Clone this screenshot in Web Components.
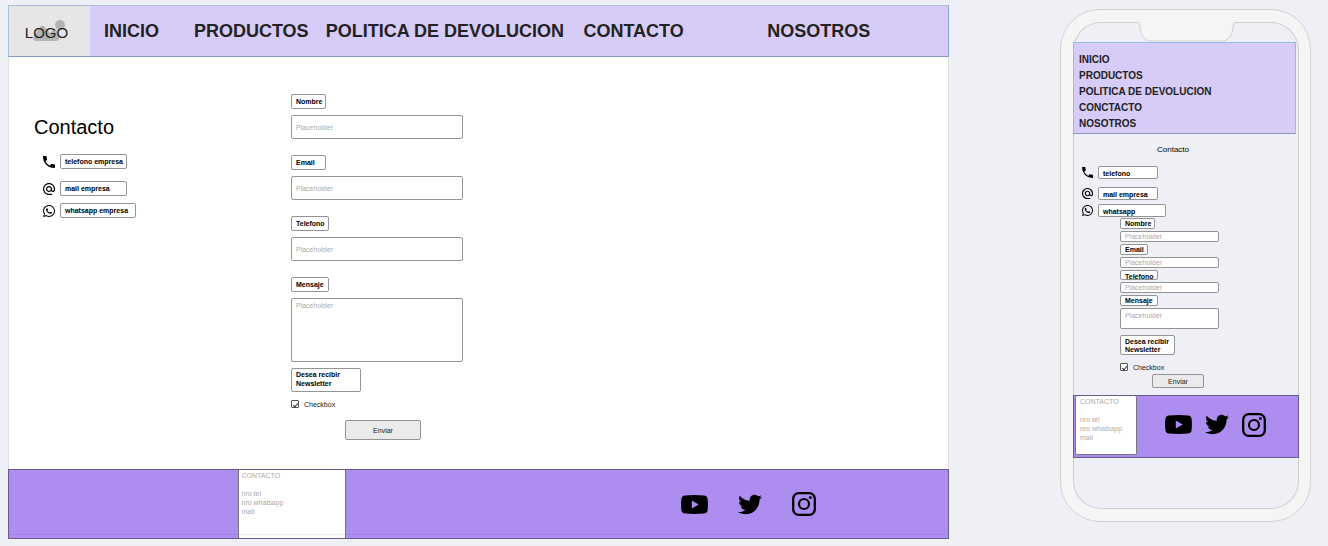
<!DOCTYPE html>
<html lang="es">
<head>
<meta charset="utf-8">
<title>Contacto</title>
<style>
  html { background: #eff0f5; }
  body {
    margin: 0;
    padding: 5px 17px 7px 8px;
    display: flex;
    align-items: flex-start;
    gap: 111px;
    font-family: "Liberation Sans", Arial, sans-serif;
    font-size: 7px;
    line-height: 9px;
    color: #000;
  }
  desktop-page { flex: 1; min-width: 0; }
  phone-frame { flex: none; margin-top: 4px; }
</style>
</head>
<body>
<desktop-page></desktop-page>
<phone-frame><mobile-page></mobile-page></phone-frame>

<script>
const define = (name, markup, setup) => {
  const template = document.createElement('template');
  template.innerHTML = markup;
  customElements.define(name, class extends HTMLElement {
    constructor() {
      super();
      this.attachShadow({ mode: 'open' }).append(template.content.cloneNode(true));
    }
    connectedCallback() {
      if (setup) setup(this, this.shadowRoot);
    }
  });
};

const ICONS = {
  phone: ['3 3 18 18', '<path d="M6.62,10.79C8.06,13.62 10.38,15.94 13.21,17.38L15.41,15.18C15.69,14.9 16.08,14.82 16.43,14.93C17.55,15.3 18.75,15.5 20,15.5A1,1 0 0,1 21,16.5V20A1,1 0 0,1 20,21A17,17 0 0,1 3,4A1,1 0 0,1 4,3H7.5A1,1 0 0,1 8.5,4C8.5,5.25 8.7,6.45 9.07,7.57C9.18,7.92 9.1,8.31 8.82,8.59L6.62,10.79Z"/>'],
  at: ['2 2 20 20', '<path d="M12,15C12.81,15 13.5,14.7 14.11,14.11C14.7,13.5 15,12.81 15,12C15,11.19 14.7,10.5 14.11,9.89C13.5,9.3 12.81,9 12,9C11.19,9 10.5,9.3 9.89,9.89C9.3,10.5 9,11.19 9,12C9,12.81 9.3,13.5 9.89,14.11C10.5,14.7 11.19,15 12,15M12,2C14.75,2 17.1,3 19.05,4.95C21,6.9 22,9.25 22,12V13.45C22,14.45 21.65,15.3 21,16C20.3,16.67 19.5,17 18.5,17C17.3,17 16.31,16.5 15.56,15.5C14.56,16.5 13.38,17 12,17C10.63,17 9.45,16.5 8.46,15.54C7.5,14.55 7,13.38 7,12C7,10.63 7.5,9.45 8.46,8.46C9.45,7.5 10.63,7 12,7C13.38,7 14.55,7.5 15.54,8.46C16.5,9.45 17,10.63 17,12V13.45C17,13.86 17.16,14.22 17.46,14.53C17.76,14.84 18.11,15 18.5,15C18.92,15 19.27,14.84 19.57,14.53C19.87,14.22 20,13.86 20,13.45V12C20,9.81 19.23,7.93 17.65,6.35C16.07,4.77 14.19,4 12,4C9.81,4 7.93,4.77 6.35,6.35C4.77,7.93 4,9.81 4,12C4,14.19 4.77,16.07 6.35,17.65C7.93,19.23 9.81,20 12,20H17V22H12C9.25,22 6.9,21 4.95,19.05C3,17.1 2,14.75 2,12C2,9.25 3,6.9 4.95,4.95C6.9,3 9.25,2 12,2Z"/>'],
  whatsapp: ['2 2 20 20', '<path d="M12.04 2C6.58 2 2.13 6.45 2.13 11.91C2.13 13.66 2.59 15.36 3.45 16.86L2.05 22L7.3 20.62C8.75 21.41 10.38 21.83 12.04 21.83C17.5 21.83 21.95 17.38 21.95 11.92C21.95 9.27 20.92 6.78 19.05 4.91C17.18 3.03 14.69 2 12.04 2M12.05 3.67C14.25 3.67 16.31 4.53 17.87 6.09C19.42 7.65 20.28 9.72 20.28 11.92C20.28 16.46 16.58 20.15 12.04 20.15C10.56 20.15 9.11 19.76 7.85 19L7.55 18.83L4.43 19.65L5.26 16.61L5.06 16.29C4.24 15 3.8 13.47 3.8 11.91C3.81 7.37 7.5 3.67 12.05 3.67M8.53 7.33C8.37 7.33 8.1 7.39 7.87 7.64C7.65 7.89 7 8.5 7 9.71C7 10.93 7.89 12.1 8 12.27C8.14 12.44 9.76 14.94 12.25 16C12.84 16.27 13.3 16.42 13.66 16.53C14.25 16.72 14.79 16.69 15.22 16.63C15.7 16.56 16.68 16.03 16.89 15.45C17.1 14.87 17.1 14.38 17.04 14.27C16.97 14.17 16.81 14.11 16.56 14C16.31 13.86 15.09 13.26 14.87 13.18C14.64 13.1 14.5 13.06 14.31 13.3C14.15 13.55 13.67 14.11 13.53 14.27C13.38 14.44 13.24 14.46 13 14.34C12.74 14.21 11.94 13.95 11 13.11C10.26 12.45 9.77 11.64 9.62 11.39C9.5 11.15 9.61 11 9.73 10.89C9.84 10.78 10 10.6 10.1 10.45C10.23 10.31 10.27 10.2 10.35 10.04C10.43 9.87 10.39 9.73 10.33 9.61C10.27 9.5 9.77 8.26 9.56 7.77C9.36 7.29 9.16 7.35 9 7.34C8.86 7.34 8.7 7.33 8.53 7.33Z"/>'],
  youtube: ['0 0 27 19', '<path fill-rule="evenodd" d="M4 .4Q13.500-.4 23 .4Q26.300.7 26.600 4Q27.300 9.500 26.600 15Q26.300 18.300 23 18.600Q13.500 19.400 4 18.600Q.7 18.300.4 15Q-.3 9.500.4 4Q.7.7 4 .4ZM10.800 5.500V13.500L17.600 9.500Z"/>'],
  twitter: ['1.500 4 21 17', '<path d="M22.46,6C21.69,6.35 20.86,6.58 20,6.69C20.88,6.16 21.56,5.32 21.88,4.31C21.05,4.81 20.13,5.16 19.16,5.36C18.37,4.5 17.26,4 16,4C13.65,4 11.73,5.92 11.73,8.29C11.73,8.63 11.77,8.96 11.84,9.27C8.28,9.09 5.11,7.38 3,4.79C2.63,5.42 2.42,6.16 2.42,6.94C2.42,8.43 3.17,9.75 4.33,10.5C3.62,10.5 2.96,10.3 2.38,10C2.38,10 2.38,10 2.38,10.03C2.38,12.11 3.86,13.85 5.82,14.24C5.46,14.34 5.08,14.39 4.69,14.39C4.42,14.39 4.15,14.36 3.89,14.31C4.43,16 6,17.26 7.89,17.29C6.43,18.45 4.58,19.13 2.56,19.13C2.22,19.13 1.88,19.11 1.54,19.07C3.44,20.29 5.7,21 8.12,21C16,21 20.33,14.46 20.33,8.79C20.33,8.6 20.33,8.42 20.32,8.23C21.16,7.63 21.88,6.87 22.46,6Z"/>'],
  instagram: ['0 0 24 24', '<rect x="1.200" y="1.200" width="21.600" height="21.600" rx="5.500" fill="none" stroke="#000" stroke-width="2.300"/><circle cx="12" cy="12" r="5" fill="none" stroke="#000" stroke-width="2.200"/><circle cx="18.400" cy="5.600" r="1.500"/>']
};

define('ui-icon', `
  <style>
    :host { display: block; width: var(--icon-size, 12px); height: var(--icon-size, 12px); flex: none; }
    svg { display: block; width: 100%; height: 100%; }
  </style>
  <svg aria-hidden="true"></svg>`,
  (host, root) => {
    const [box, shape] = ICONS[host.getAttribute('name')];
    const svg = root.querySelector('svg');
    svg.setAttribute('viewBox', box);
    svg.innerHTML = shape;
  });

define('text-tag', `
  <style>
    :host {
      display: block;
      box-sizing: border-box;
      width: fit-content;
      min-height: var(--tag-height, 15px);
      padding: var(--tag-pad, 2px) 3px 0 4px;
      border: 1px solid #949494;
      border-radius: 2px;
      background: #fff;
      font-weight: bold;
      line-height: var(--tag-line, 9px);
      white-space: nowrap;
    }
    :host([clipped]) { height: var(--tag-clip, 15px); min-height: 0; padding-top: 2px; overflow: hidden; }
  </style>
  <slot></slot>`);

define('contact-list', `
  <style>
    :host { display: block; }
    ul {
      display: grid;
      grid-template-rows: var(--list-rows);
      align-items: start;
      margin: 0;
      padding: 0;
      list-style: none;
    }
    li { display: grid; grid-template-columns: auto auto; column-gap: 5px; align-items: center; justify-content: start; }
    text-tag { width: var(--item-width, 67px); }
    li:last-child text-tag { width: var(--item-last-width, 76px); }
  </style>
  <ul>
    <li><ui-icon name="phone"></ui-icon><text-tag><slot name="phone"></slot></text-tag></li>
    <li><ui-icon name="at"></ui-icon><text-tag><slot name="mail"></slot></text-tag></li>
    <li><ui-icon name="whatsapp"></ui-icon><text-tag><slot name="whatsapp"></slot></text-tag></li>
  </ul>`);

define('form-field', `
  <style>
    :host { display: grid; gap: var(--label-gap, 6px); justify-items: start; }
    label { display: block; }
    text-tag { width: var(--label-width); }
    input, textarea {
      display: block;
      box-sizing: border-box;
      width: 100%;
      height: var(--input-height, 24px);
      margin: 0;
      padding: 0 4px;
      border: 1px solid #949494;
      border-radius: 2px;
      background: #fff;
      font: inherit;
      resize: none;
      outline: none;
    }
    textarea { height: var(--area-height, 64px); padding-top: 2px; overflow: hidden; }
    ::placeholder { color: #aaa; opacity: 1; }
  </style>
  <label for="control"><text-tag><slot></slot></text-tag></label>`,
  (host, root) => {
    if (root.querySelector('#control')) return;
    const type = host.getAttribute('type');
    const control = document.createElement(type === 'textarea' ? 'textarea' : 'input');
    if (type !== 'textarea') control.type = type;
    control.id = 'control';
    control.placeholder = 'Placeholder';
    root.append(control);
    root.querySelector('text-tag').toggleAttribute('clipped', host.hasAttribute('clipped'));
  });

define('contact-form', `
  <style>
    :host { display: block; width: var(--form-width, 172px); }
    form { display: flex; flex-direction: column; align-items: stretch; }
    .fields { display: grid; gap: var(--field-gap, 16px); }
    .short { --label-width: var(--label-short, 35px); }
    .email { --label-width: var(--label-email, 35px); }
    .long { --label-width: var(--label-long, 38px); }
    .news { display: block; width: fit-content; margin-top: 6px; }
    .news text-tag { --tag-pad: var(--news-pad, 1px); --tag-height: var(--news-height, 24px); width: var(--news-width, 70px); }
    .check { display: flex; align-items: center; gap: 5px; height: 8px; margin-top: 8px; }
    .check label { color: #222; }
    input {
      appearance: none;
      box-sizing: border-box;
      display: grid;
      place-items: center;
      width: 8px;
      height: 8px;
      margin: 0;
      border: 1px solid #555;
      border-radius: 1px;
      background: #fff;
    }
    input:checked::before {
      content: "";
      box-sizing: border-box;
      width: 3px;
      height: 5px;
      border: solid #333;
      border-width: 0 1px 1px 0;
      transform: rotate(40deg);
    }
    button {
      width: var(--button-width, 76px);
      height: var(--button-height, 20px);
      margin: var(--button-gap, 12px) 0 0 var(--button-indent, 54px);
      padding: 0;
      border: 1px solid #949494;
      border-radius: 2px;
      background: #ebebeb;
      font: inherit;
      color: #222;
    }
  </style>
  <form>
    <div class="fields">
      <form-field class="short" type="text">Nombre</form-field>
      <form-field class="email" type="email">Email</form-field>
      <form-field class="long" type="tel" clipped>Telefono</form-field>
      <form-field class="long" type="textarea">Mensaje</form-field>
    </div>
    <label class="news" for="news"><text-tag>Desea recibir<br>Newsletter</text-tag></label>
    <div class="check"><input id="news" type="checkbox" checked><label for="news">Checkbox</label></div>
    <button type="button">Enviar</button>
  </form>`);

define('social-links', `
  <style>
    :host { display: flex; align-items: center; gap: var(--social-gap, 30px); }
    a { display: block; }
    ui-icon { width: 24px; height: 24px; }
    .youtube ui-icon { width: 27px; height: 19px; }
    .twitter ui-icon { height: 21px; }
  </style>
  <a class="youtube" href="#" aria-label="YouTube"><ui-icon name="youtube"></ui-icon></a>
  <a class="twitter" href="#" aria-label="Twitter"><ui-icon name="twitter"></ui-icon></a>
  <a class="instagram" href="#" aria-label="Instagram"><ui-icon name="instagram"></ui-icon></a>`);

define('contact-card', `
  <style>
    :host { display: block; box-sizing: border-box; background: #fff; color: #aaa; }
    h2 { margin: 0 0 9px; font: inherit; }
    p { margin: 0; }
  </style>
  <h2>CONTACTO</h2>
  <p>nro tel</p>
  <p>nro whatsapp</p>
  <p>mail</p>`);

define('site-logo', `
  <style>
    :host { display: grid; place-items: center; background: #e6e6e6; color: #222; font-size: 15px; line-height: 18px; }
    div { position: relative; padding: 4px 6px 0 0; }
    svg { position: absolute; left: 7px; top: -1px; width: 34px; height: 24px; fill: #b4b4b4; }
    span { position: relative; }
  </style>
  <div>
    <svg viewBox="0 0 34 24" aria-hidden="true"><circle cx="28" cy="6" r="5"/><path d="M3 22Q0 21 2 17L8 8Q10 5 13 8L18 14L22 10Q24 9 25 12L27 19Q27 22 24 22Z"/></svg>
    <span>LOGO</span>
  </div>`);

define('desktop-page', `
  <style>
    :host { display: block; background: #fff; }
    header {
      display: grid;
      grid-template-columns: 81px 1fr;
      box-sizing: border-box;
      height: 52px;
      border: 1px solid;
      border-color: #a6bfdc #8ba9cc #8499bb #a6bfdc;
      background: #d7cbf7;
    }
    nav {
      display: grid;
      grid-template-columns: 90fr 132fr 258fr 184fr 181fr;
      align-items: center;
      padding-left: 14px;
      font-size: 18px;
      line-height: 20px;
      font-weight: bold;
      white-space: nowrap;
    }
    a { color: #222; text-decoration: none; }
    main {
      display: grid;
      grid-template-columns: 283fr 658fr;
      padding: 37px 0 29px;
      box-shadow: inset 1px 0 #dfe0e3, inset -1px 0 #dfe0e3;
    }
    aside { padding: 21px 0 0 26px; }
    h1 { margin: 0; font-size: 20px; line-height: 24px; font-weight: normal; }
    contact-list { --list-rows: 27px 22px 15px; margin: 15px 0 0 9px; }
    footer {
      display: grid;
      grid-template-columns: 229fr 109fr 335fr 268fr;
      box-sizing: border-box;
      height: 70px;
      border: 1px solid #6b5a8c;
      background: linear-gradient(#0000 64px, #0001 64px 65px, #0000 65px), #ad8ef0;
    }
    contact-card {
      grid-column: 2;
      padding: 1px 3px 0;
      border: solid #777;
      border-width: 0 1px;
      background: linear-gradient(#0000 64px, #0001 64px 65px, #0000 65px), #fff;
    }
    social-links { grid-column: 4; }
  </style>
  <header>
    <site-logo></site-logo>
    <nav>
      <a href="#">INICIO</a>
      <a href="#">PRODUCTOS</a>
      <a href="#">POLITICA DE DEVOLUCION</a>
      <a href="#">CONTACTO</a>
      <a href="#">NOSOTROS</a>
    </nav>
  </header>
  <main>
    <aside>
      <h1>Contacto</h1>
      <contact-list>
        <span slot="phone">telefono empresa</span>
        <span slot="mail">mail empresa</span>
        <span slot="whatsapp">whatsapp empresa</span>
      </contact-list>
    </aside>
    <contact-form></contact-form>
  </main>
  <footer>
    <contact-card></contact-card>
    <social-links></social-links>
  </footer>`);

define('phone-frame', `
  <style>
    :host {
      display: block;
      box-sizing: border-box;
      width: 251px;
      padding: 12px 11px 12px 12px;
      border: 1px solid #d2d2d4;
      border-radius: 40px;
      background: #f5f5f5;
    }
    .screen {
      min-height: 487px;
      border-radius: 28px;
      background: #eff0f5;
      box-shadow: inset 0 0 0 1px #cfcfd2;
    }
    .notch { display: block; width: 97px; height: 20px; margin: 0 auto; }
  </style>
  <div class="screen">
    <svg class="notch" viewBox="0 0 97 20" aria-hidden="true">
      <path d="M0 0H97V1Q95 1 95 5C95 13 90 19 84 19H13C7 19 2 13 2 5Q2 1 0 1Z" fill="#f5f5f5"/>
      <path d="M0 .5Q2 .5 2 5C2 13 7 19 13 19H84C90 19 95 13 95 5Q95 .5 97 .5" fill="none" stroke="#cfcfd2"/>
    </svg>
    <slot></slot>
  </div>`);

define('mobile-page', `
  <style>
    :host { display: block; }
    nav {
      display: flex;
      flex-direction: column;
      margin-right: 3px;
      padding: 9px 5px 1px;
      border: 1px solid #94bbe0;
      border-bottom-color: #8499bb;
      background: #d7cbf7;
      font-size: 10px;
      line-height: 16px;
      font-weight: bold;
    }
    a { color: #222; text-decoration: none; }
    h1 { margin: 0; padding: 8px 0 8px 84px; font-size: 8px; line-height: 16px; font-weight: normal; }
    contact-list {
      --icon-size: 11px;
      --list-rows: 21px 17px 14px;
      --tag-height: 13px;
      --item-width: 60px;
      --item-last-width: 68px;
      margin-left: 9px;
    }
    contact-form {
      --form-width: 99px;
      --tag-height: 11px;
      --tag-line: 8px;
      --tag-pad: 1px;
      --tag-clip: 10px;
      --label-gap: 2px;
      --label-email: 28px;
      --field-gap: 2px;
      --input-height: 11px;
      --area-height: 21px;
      --news-pad: 2px;
      --news-width: 55px;
      --news-height: 18px;
      --button-width: 52px;
      --button-height: 14px;
      --button-gap: 3px;
      --button-indent: 32px;
      margin-left: 47px;
    }
    footer {
      display: flex;
      align-items: center;
      gap: 28px;
      box-sizing: border-box;
      height: 63px;
      margin-top: 7px;
      padding: 0 1px;
      border: 1px solid #6b5a8c;
      background: #ad8ef0;
    }
    contact-card { align-self: start; width: 62px; height: 59px; padding: 1px 4px; border: solid #777; border-width: 0 1px 1px; border-radius: 2px; }
    social-links { --social-gap: 13px; padding-bottom: 4px; }
  </style>
  <nav>
    <a href="#">INICIO</a>
    <a href="#">PRODUCTOS</a>
    <a href="#">POLITICA DE DEVOLUCION</a>
    <a href="#">CONCTACTO</a>
    <a href="#">NOSOTROS</a>
  </nav>
  <h1>Contacto</h1>
  <contact-list>
    <span slot="phone">telefono</span>
    <span slot="mail">mail empresa</span>
    <span slot="whatsapp">whatsapp</span>
  </contact-list>
  <contact-form></contact-form>
  <footer>
    <contact-card></contact-card>
    <social-links></social-links>
  </footer>`);
</script>
</body>
</html>
